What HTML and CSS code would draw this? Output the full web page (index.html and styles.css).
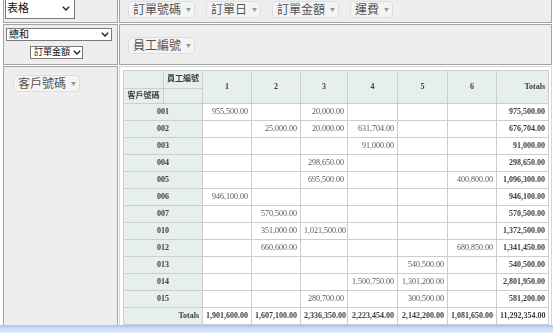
FILE: index.html
```html
<!DOCTYPE html>
<html lang="zh-Hant">
<head>
    <meta charset="UTF-8">
    <meta name="viewport" content="width=device-width, initial-scale=1.0">
    <title>樞紐分析表</title>
    <link rel="stylesheet" href="styles.css">
</head>
<body>
    <div class="page">
        <div class="pvt-ui">
            <!-- renderer -->
            <div class="cell renderer-cell">
                <div class="select select-renderer">
                    <span>表格</span>
                    <svg width="8" height="5" viewBox="0 0 8 5"><polyline points="0.8,0.8 4,4 7.2,0.8" fill="none" stroke="#222" stroke-width="1.4"/></svg>
                </div>
            </div>
            <!-- unused attributes -->
            <div class="cell axis unused">
                <span class="pill">訂單號碼<svg width="5" height="4" viewBox="0 0 5 4"><polygon points="0,0 5,0 2.5,4" fill="#9a9a9a"/></svg></span>
                <span class="pill">訂單日<svg width="5" height="4" viewBox="0 0 5 4"><polygon points="0,0 5,0 2.5,4" fill="#9a9a9a"/></svg></span>
                <span class="pill">訂單金額<svg width="5" height="4" viewBox="0 0 5 4"><polygon points="0,0 5,0 2.5,4" fill="#9a9a9a"/></svg></span>
                <span class="pill">運費<svg width="5" height="4" viewBox="0 0 5 4"><polygon points="0,0 5,0 2.5,4" fill="#9a9a9a"/></svg></span>
            </div>
            <!-- aggregator -->
            <div class="cell vals">
                <div class="select select-agg">
                    <span>總和</span>
                    <svg width="8" height="5" viewBox="0 0 8 5"><polyline points="0.8,0.8 4,4 7.2,0.8" fill="none" stroke="#222" stroke-width="1.4"/></svg>
                </div>
                <div class="select select-attr">
                    <span>訂單金額</span>
                    <svg width="8" height="5" viewBox="0 0 8 5"><polyline points="0.8,0.8 4,4 7.2,0.8" fill="none" stroke="#222" stroke-width="1.4"/></svg>
                </div>
            </div>
            <!-- column attributes -->
            <div class="cell axis cols">
                <span class="pill">員工編號<svg width="5" height="4" viewBox="0 0 5 4"><polygon points="0,0 5,0 2.5,4" fill="#9a9a9a"/></svg></span>
            </div>
            <!-- row attributes -->
            <div class="cell axis rows">
                <span class="pill">客戶號碼<svg width="5" height="4" viewBox="0 0 5 4"><polygon points="0,0 5,0 2.5,4" fill="#9a9a9a"/></svg></span>
            </div>
            <!-- output -->
            <div class="cell output">
                <table class="pvt-table">
                    <colgroup>
                        <col style="width:40px"><col style="width:39px">
                        <col style="width:49px"><col style="width:49px"><col style="width:47px">
                        <col style="width:50px"><col style="width:50px"><col style="width:49px">
                        <col style="width:52px">
                    </colgroup>
                    <thead>
                        <tr class="head-top">
                            <th></th>
                            <th class="axis-label">員工編號</th>
                            <th rowspan="2">1</th>
                            <th rowspan="2">2</th>
                            <th rowspan="2">3</th>
                            <th rowspan="2">4</th>
                            <th rowspan="2">5</th>
                            <th rowspan="2">6</th>
                            <th rowspan="2" class="total-label">Totals</th>
                        </tr>
                        <tr class="head-bottom">
                            <th class="axis-label">客戶號碼</th>
                            <th></th>
                        </tr>
                    </thead>
                    <tbody>
                        <tr><th colspan="2">001</th><td>955,500.00</td><td></td><td>20,000.00</td><td></td><td></td><td></td><td class="total">975,500.00</td></tr>
                        <tr><th colspan="2">002</th><td></td><td>25,000.00</td><td>20,000.00</td><td>631,704.00</td><td></td><td></td><td class="total">676,704.00</td></tr>
                        <tr><th colspan="2">003</th><td></td><td></td><td></td><td>91,000.00</td><td></td><td></td><td class="total">91,000.00</td></tr>
                        <tr><th colspan="2">004</th><td></td><td></td><td>298,650.00</td><td></td><td></td><td></td><td class="total">298,650.00</td></tr>
                        <tr><th colspan="2">005</th><td></td><td></td><td>695,500.00</td><td></td><td></td><td>400,800.00</td><td class="total">1,096,300.00</td></tr>
                        <tr><th colspan="2">006</th><td>946,100.00</td><td></td><td></td><td></td><td></td><td></td><td class="total">946,100.00</td></tr>
                        <tr><th colspan="2">007</th><td></td><td>570,500.00</td><td></td><td></td><td></td><td></td><td class="total">570,500.00</td></tr>
                        <tr><th colspan="2">010</th><td></td><td>351,000.00</td><td>1,021,500.00</td><td></td><td></td><td></td><td class="total">1,372,500.00</td></tr>
                        <tr><th colspan="2">012</th><td></td><td>660,600.00</td><td></td><td></td><td></td><td>680,850.00</td><td class="total">1,341,450.00</td></tr>
                        <tr><th colspan="2">013</th><td></td><td></td><td></td><td></td><td>540,500.00</td><td></td><td class="total">540,500.00</td></tr>
                        <tr><th colspan="2">014</th><td></td><td></td><td></td><td>1,500,750.00</td><td>1,301,200.00</td><td></td><td class="total">2,801,950.00</td></tr>
                        <tr><th colspan="2">015</th><td></td><td></td><td>280,700.00</td><td></td><td>300,500.00</td><td></td><td class="total">581,200.00</td></tr>
                        <tr>
                            <th colspan="2" class="total-label">Totals</th>
                            <td class="total">1,901,600.00</td>
                            <td class="total">1,607,100.00</td>
                            <td class="total">2,336,350.00</td>
                            <td class="total">2,223,454.00</td>
                            <td class="total">2,142,200.00</td>
                            <td class="total">1,081,650.00</td>
                            <td class="total">11,292,354.00</td>
                        </tr>
                    </tbody>
                </table>
            </div>
        </div>
    </div>
    <div class="statusbar"></div>
</body>
</html>
```

FILE: styles.css
```css
body {
    margin: 0;
    height: 333px;
    overflow: hidden;
    display: flex;
    flex-direction: column;
    background: #fff;
    font-family: "Liberation Sans", "Noto Sans CJK TC", sans-serif;
}

.page {
    height: 325px;
    overflow: hidden;
    padding-left: 3px;
}

.pvt-ui {
    display: grid;
    grid-template-columns: 115px 433px;
    grid-template-rows: 28px 41px 270px;
    gap: 1px;
    margin-top: -5px;
}

.cell {
    box-sizing: border-box;
    border: 1px solid #a4a4a4;
    background: #eeeeee;
}

/* selects */
.select {
    box-sizing: border-box;
    display: flex;
    align-items: center;
    justify-content: space-between;
    gap: 3px;
    border: 1px solid #7a7a7a;
    background: #fff;
    color: #111;
    line-height: 1;
    white-space: nowrap;
}

.renderer-cell {
    padding: 2px 0 0 1px;
}

.select-renderer {
    width: 70px;
    height: 21px;
    padding: 0 4px 0 1px;
    font-size: 11px;
}

.vals {
    padding: 3px 4px 0 2px;
}

.select-agg {
    width: 106px;
    height: 13px;
    padding: 0 2px 0 2px;
    font-size: 10px;
}

.select-attr {
    width: 53px;
    height: 13px;
    margin: 5px 0 0 24px;
    padding: 0 1px 0 3px;
    font-size: 9px;
}

/* attribute pills */
.axis {
    display: flex;
    align-items: flex-start;
    gap: 11px;
}

.unused {
    padding: 5px 8px 0;
}

.cols {
    padding: 12px 8px 0;
}

.rows {
    padding: 8px 9px 0;
}

.pill {
    box-sizing: border-box;
    display: inline-flex;
    align-items: center;
    gap: 5px;
    height: 17px;
    padding: 0 3px 0 4px;
    border: 1px solid #dedede;
    border-radius: 4px;
    background: #f4f4f4;
    color: #555;
    font-size: 12px;
    line-height: 1;
    white-space: nowrap;
}

/* output table */
.output {
    background: #fff;
    border-color: #d6d6d6;
    padding: 3px 0 0 3px;
}

.pvt-table {
    border-collapse: collapse;
    table-layout: fixed;
    width: 425px;
    font-family: "Liberation Serif", "Noto Sans CJK TC", serif;
    font-size: 8px;
    color: #3d3d3d;
    will-change: transform;
}

.pvt-table th,
.pvt-table td {
    border: 1px solid #cdcdcd;
    padding: 3px 3px;
    line-height: 10px;
    height: 10px;
    white-space: nowrap;
    overflow: hidden;
}

.pvt-table th {
    background: #e6eeee;
    font-weight: bold;
    text-align: center;
}

.pvt-table .head-top th {
    height: 11px;
    vertical-align: middle;
}

.pvt-table .head-top .axis-label {
    vertical-align: top;
}

.pvt-table .head-bottom th {
    padding: 2px 3px;
}

.pvt-table td {
    background: #fff;
    color: #555;
    text-align: right;
}

.pvt-table .total-label {
    text-align: right;
}

.pvt-table td.total {
    color: #3d3d3d;
    font-weight: bold;
}

.statusbar {
    height: 8px;
    background: linear-gradient(#a9c3e6, #c6d9f2 35%, #e4edf9);
}
```
